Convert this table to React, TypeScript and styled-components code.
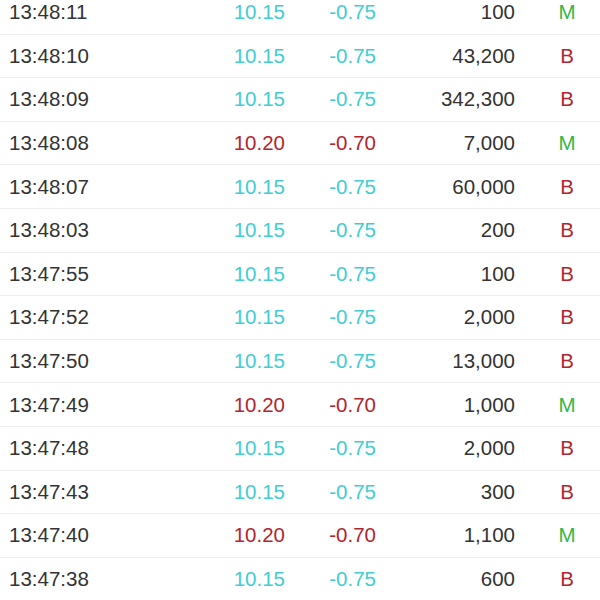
import React from "react";
import styled, { createGlobalStyle } from "styled-components";

const Global = createGlobalStyle`
  html, body { margin: 0; padding: 0; background: #ffffff; overflow: hidden; }
  body { font-family: "Liberation Sans", Arial, sans-serif; }
`;

const List = styled.div`
  display: flex;
  flex-direction: column;
  margin-top: -9px;
  width: 600px;
`;

const Row = styled.div`
  display: grid;
  grid-template-columns: 9px 120px 156px 91px 139px 25px 54px 1fr;
  align-items: center;
  height: 43.6px;
  box-sizing: border-box;
  border-bottom: 1px solid #efefef;
  font-size: 20.5px;
  color: #333333;
`;

const Time = styled.span`
  grid-column: 2;
  text-align: left;
`;

const Num = styled.span<{ $tone: "up" | "down" }>`
  text-align: right;
  color: ${(p) => (p.$tone === "down" ? "#41cdd3" : "#b2262d")};
`;

const Vol = styled.span`
  text-align: right;
  color: #333333;
`;

const Side = styled.span<{ $side: "B" | "M" }>`
  grid-column: 7;
  text-align: center;
  color: ${(p) => (p.$side === "B" ? "#b2262d" : "#36b646")};
`;

type Trade = { t: string; p: string; c: string; v: string; s: "B" | "M" };

const trades: Trade[] = [
  { t: "13:48:11", p: "10.15", c: "-0.75", v: "100", s: "M" },
  { t: "13:48:10", p: "10.15", c: "-0.75", v: "43,200", s: "B" },
  { t: "13:48:09", p: "10.15", c: "-0.75", v: "342,300", s: "B" },
  { t: "13:48:08", p: "10.20", c: "-0.70", v: "7,000", s: "M" },
  { t: "13:48:07", p: "10.15", c: "-0.75", v: "60,000", s: "B" },
  { t: "13:48:03", p: "10.15", c: "-0.75", v: "200", s: "B" },
  { t: "13:47:55", p: "10.15", c: "-0.75", v: "100", s: "B" },
  { t: "13:47:52", p: "10.15", c: "-0.75", v: "2,000", s: "B" },
  { t: "13:47:50", p: "10.15", c: "-0.75", v: "13,000", s: "B" },
  { t: "13:47:49", p: "10.20", c: "-0.70", v: "1,000", s: "M" },
  { t: "13:47:48", p: "10.15", c: "-0.75", v: "2,000", s: "B" },
  { t: "13:47:43", p: "10.15", c: "-0.75", v: "300", s: "B" },
  { t: "13:47:40", p: "10.20", c: "-0.70", v: "1,100", s: "M" },
  { t: "13:47:38", p: "10.15", c: "-0.75", v: "600", s: "B" },
];

export default function App() {
  return (
    <>
      <Global />
      <List>
        {trades.map((r, i) => {
          const tone = r.p === "10.20" ? "up" : "down";
          return (
            <Row key={i}>
              <Time>{r.t}</Time>
              <Num $tone={tone}>{r.p}</Num>
              <Num $tone={tone}>{r.c}</Num>
              <Vol>{r.v}</Vol>
              <Side $side={r.s}>{r.s}</Side>
            </Row>
          );
        })}
      </List>
    </>
  );
}
